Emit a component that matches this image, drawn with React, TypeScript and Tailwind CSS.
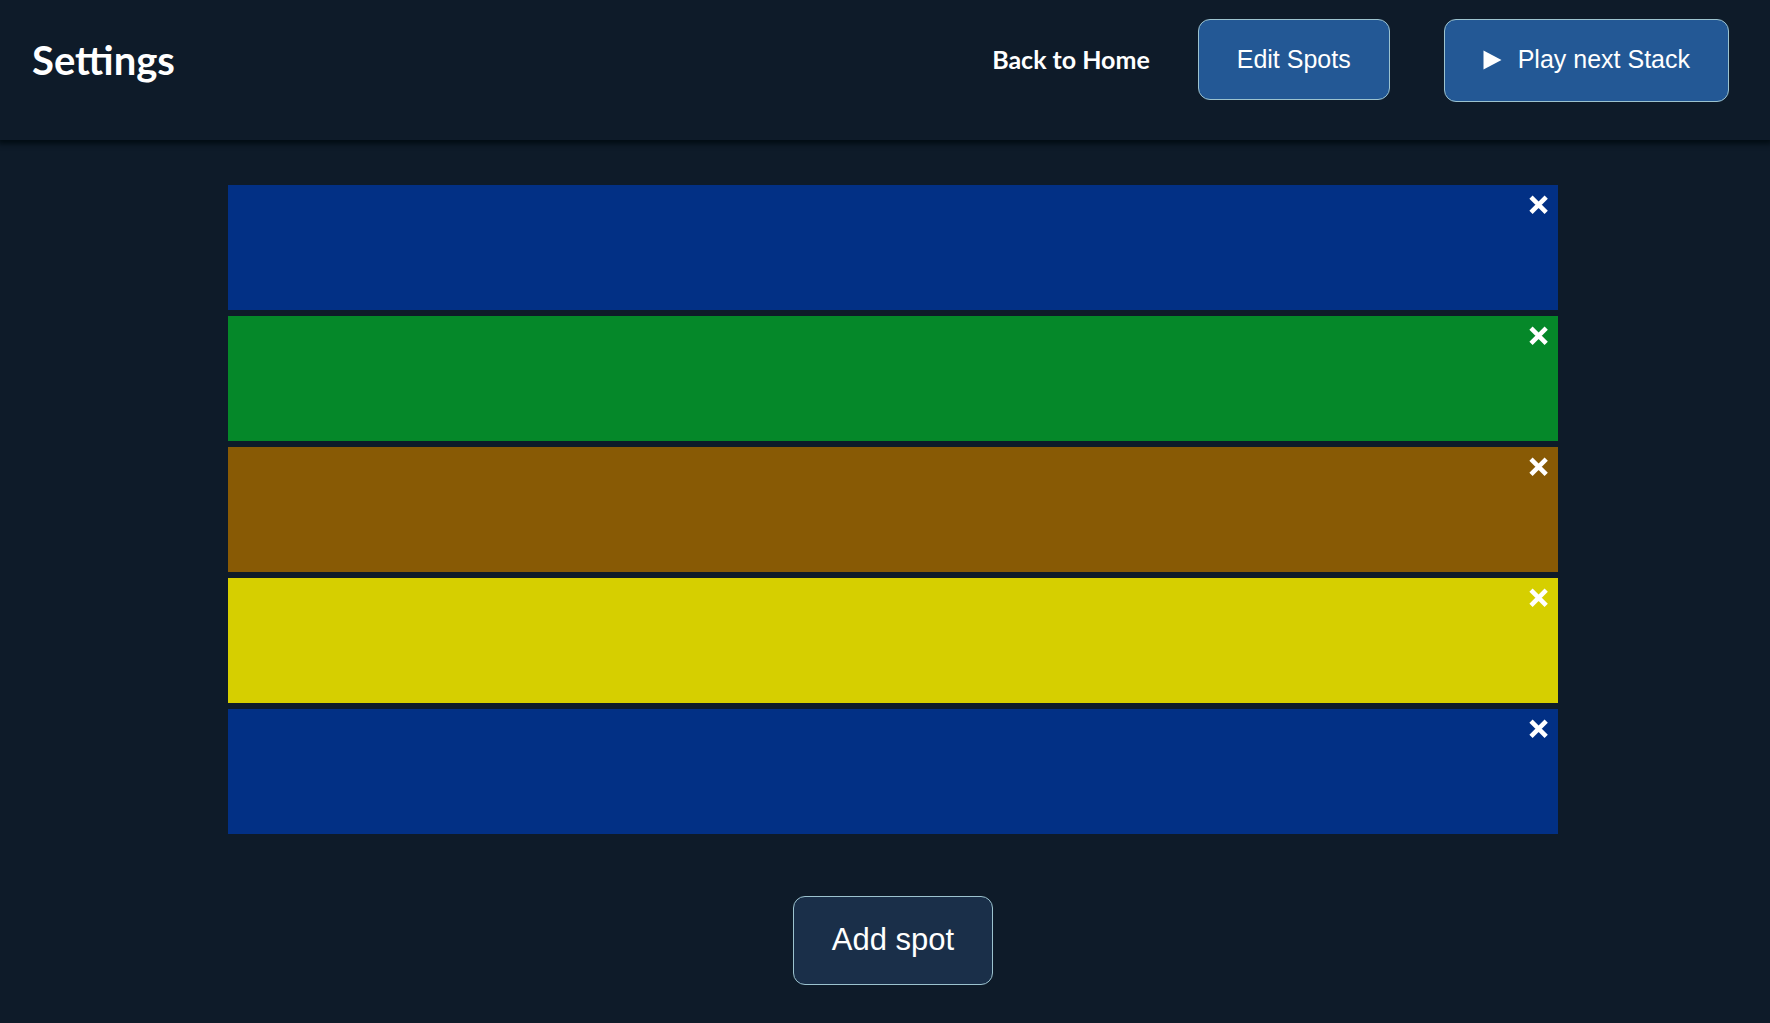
import { useState } from "react";

const initialSpots = [
  { id: 1, color: "bg-[#023085]" },
  { id: 2, color: "bg-[#058829]" },
  { id: 3, color: "bg-[#885a05]" },
  { id: 4, color: "bg-[#d6cf00]" },
  { id: 5, color: "bg-[#023085]" },
];

function PlayIcon() {
  return (
    <svg viewBox="0 0 19 20" className="h-5 w-[19px]" fill="currentColor" aria-hidden="true">
      <path d="M0.5 0.5 L18.5 10 L0.5 19.5 Z" />
    </svg>
  );
}

function CloseIcon() {
  return (
    <svg viewBox="0 0 20 20" className="size-5" stroke="currentColor" strokeWidth="4.6" aria-hidden="true">
      <path d="M2 2.2 L17.2 17.4 M17.2 2.2 L2 17.4" />
    </svg>
  );
}

function Header() {
  return (
    <header className="flex h-[140px] items-start justify-between pr-[41px] pl-8 shadow-[0_2px_5px_2px_#020d14]">
      <h1 className="mt-8 font-[Lato,sans-serif] text-[40px] leading-[56px] font-bold">Settings</h1>
      <nav className="mt-[19px] flex items-start">
        <a href="#home" className="mr-12 font-[Lato,sans-serif] text-[25px] leading-[80px] font-bold">
          Back to Home
        </a>
        <button type="button" className="mr-[54px] h-[81px] rounded-xl border border-[#9cc3cf] bg-[#235895] px-[38px] text-[25px]">
          Edit Spots
        </button>
        <button type="button" className="flex h-[83px] items-center gap-4 rounded-xl border border-[#9cc3cf] bg-[#235895] px-[38px] pb-0.5 text-[25px]">
          <PlayIcon />
          Play next Stack
        </button>
      </nav>
    </header>
  );
}

export default function App() {
  const [spots, setSpots] = useState(initialSpots);
  const addSpot = () => setSpots([...spots, { id: Date.now(), color: "bg-[#023085]" }]);

  return (
    <div className="min-h-screen bg-[#0e1b29] font-['Liberation_Sans',Arial,sans-serif] text-white">
      <Header />
      <main className="flex flex-col items-center pt-[45px] pb-8 pl-4">
        <ul className="flex w-full max-w-[1330px] flex-col gap-1.5">
          {spots.map((spot) => (
            <li key={spot.id} className={`flex h-[125px] items-start justify-end px-[9px] py-2.5 ${spot.color}`}>
              <button type="button" aria-label="Remove spot" onClick={() => setSpots(spots.filter((s) => s.id !== spot.id))}>
                <CloseIcon />
              </button>
            </li>
          ))}
        </ul>
        <button
          type="button"
          onClick={addSpot}
          className="mt-[62px] h-[89px] rounded-xl border border-[#9cc3cf] bg-[#1a2f49] px-[38px] text-[31px]"
        >
          Add spot
        </button>
      </main>
    </div>
  );
}
